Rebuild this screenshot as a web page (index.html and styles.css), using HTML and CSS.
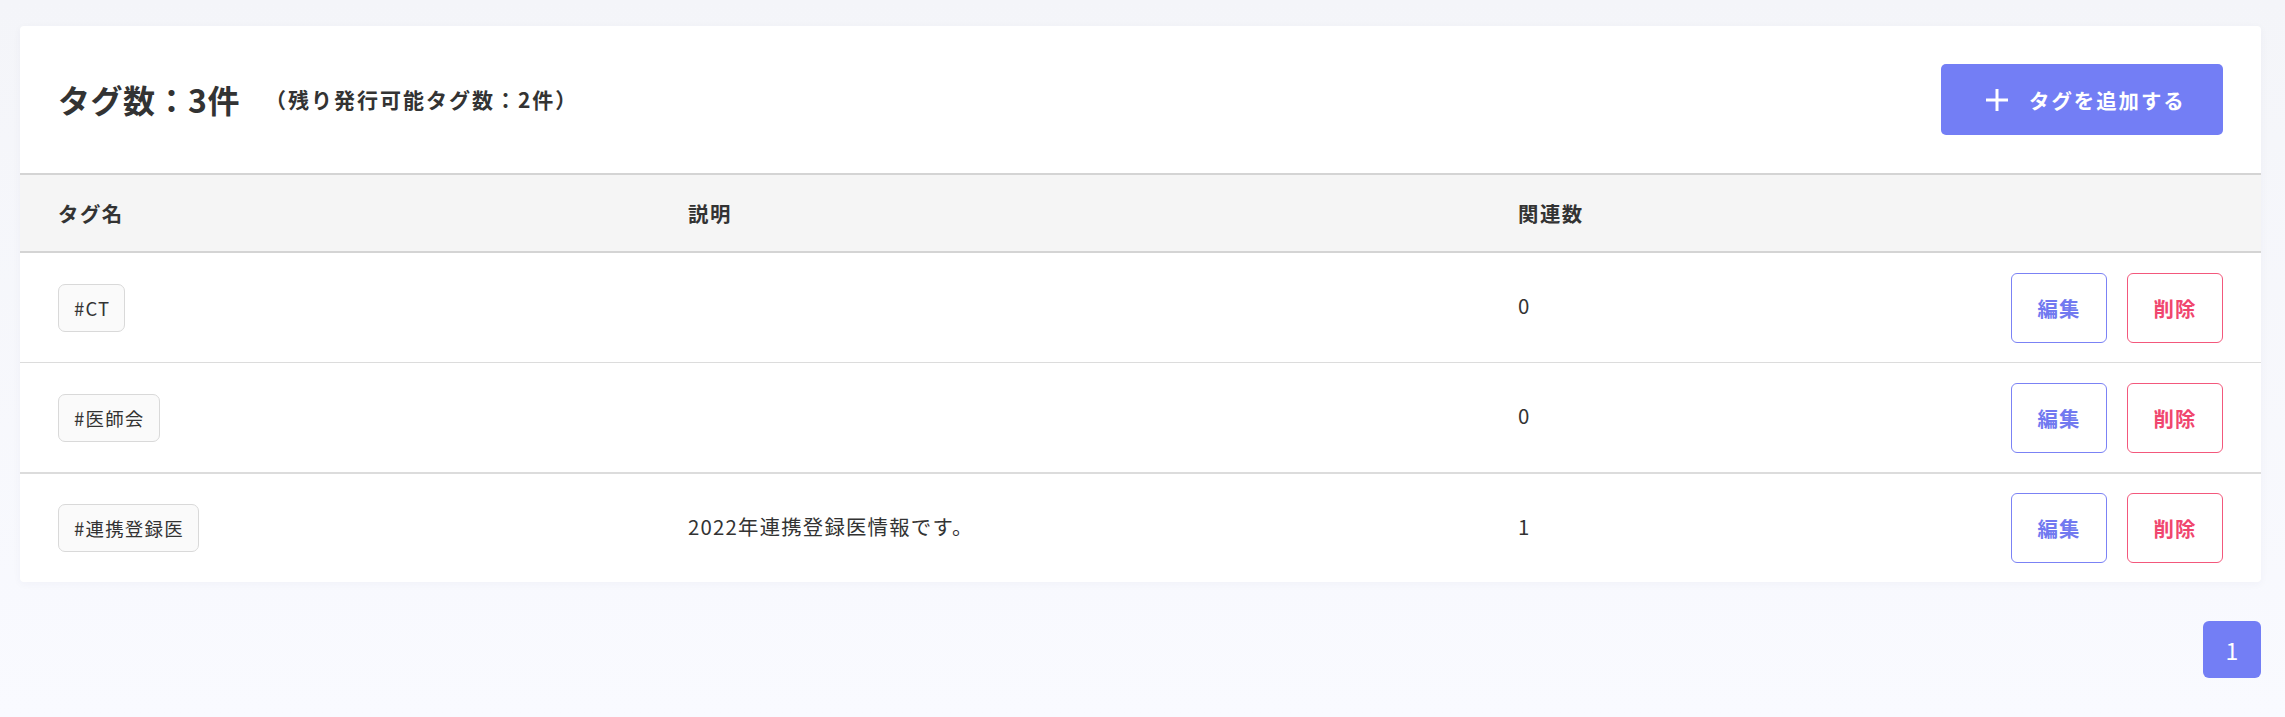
FILE: index.html
```html
<!DOCTYPE html>
<html lang="ja">
<head>
<meta charset="utf-8">
<title>タグ管理</title>
<link rel="stylesheet" href="styles.css">
</head>
<body>
<div class="page">
  <section class="card">
    <header class="card-head">
      <h1 class="title">タグ数：3件<span class="sub">（残り発行可能タグ数：2件）</span></h1>
      <button class="btn-add" type="button">
        <svg class="plus" width="22" height="22" viewBox="0 0 22 22"><path d="M11 0V22M0 11H22" stroke="#fff" stroke-width="3" fill="none"/></svg>
        <span>タグを追加する</span>
      </button>
    </header>
    <div class="thead">
      <div>タグ名</div>
      <div>説明</div>
      <div>関連数</div>
      <div></div>
    </div>
    <div class="row">
      <div><span class="chip">#CT</span></div>
      <div class="cell"></div>
      <div class="cell">0</div>
      <div class="actions"><button class="btn-edit" type="button">編集</button><button class="btn-del" type="button">削除</button></div>
    </div>
    <div class="row thick">
      <div><span class="chip">#医師会</span></div>
      <div class="cell"></div>
      <div class="cell">0</div>
      <div class="actions"><button class="btn-edit" type="button">編集</button><button class="btn-del" type="button">削除</button></div>
    </div>
    <div class="row last">
      <div><span class="chip">#連携登録医</span></div>
      <div class="cell">2022年連携登録医情報です。</div>
      <div class="cell">1</div>
      <div class="actions"><button class="btn-edit" type="button">編集</button><button class="btn-del" type="button">削除</button></div>
    </div>
  </section>
  <nav class="pager"><span class="page-num">1</span></nav>
</div>
</body>
</html>
```
FILE: styles.css
```css
* { box-sizing: border-box; }
html, body {
  margin: 0;
  height: 100%;
}
body {
  background: linear-gradient(180deg, #f4f5f9 0%, #f9faff 100%);
  font-family: "Noto Sans CJK JP", "Noto Sans", sans-serif;
  color: #333;
}
.page {
  padding: 26px 24px 0 20px;
}
.card {
  background: #fff;
  border-radius: 4px;
  box-shadow: 0 2px 8px rgba(40, 50, 90, 0.04);
  overflow: hidden;
}
.card-head {
  display: flex;
  justify-content: space-between;
  align-items: center;
  padding: 38px;
  border-bottom: 2px solid #d4d4d4;
}
.title {
  margin: 0;
  display: flex;
  align-items: center;
  font-size: 32px;
  font-weight: 700;
  letter-spacing: 0.5px;
  color: #333;
  line-height: 1.2;
}
.sub {
  margin-left: 25px;
  font-size: 21px;
  font-weight: 700;
  letter-spacing: 2px;
}
.btn-add {
  display: flex;
  align-items: center;
  width: 282px;
  height: 71px;
  padding: 0 0 0 45px;
  border: none;
  border-radius: 5px;
  background: #737ef5;
  color: #fff;
  font-family: inherit;
  font-size: 20.4px;
  font-weight: 700;
  letter-spacing: 2px;
}
.plus { margin-right: 21px; }
.thead, .row {
  display: grid;
  grid-template-columns: 630px 830px 1fr auto;
  align-items: center;
  padding: 0 38px;
}
.thead {
  height: 78px;
  background: #f5f5f5;
  border-bottom: 2px solid #d4d4d4;
  font-size: 20.4px;
  font-weight: 700;
  letter-spacing: 1.5px;
}
.row {
  height: 110px;
  border-bottom: 1px solid #dcdcdc;
  font-size: 20.4px;
}
.row.thick { height: 111px; border-bottom-width: 2px; }
.row.last { height: 108px; border-bottom: none; }
.cell { letter-spacing: 1.2px; padding-bottom: 5px; }
.chip {
  display: inline-flex;
  align-items: center;
  height: 48px;
  padding: 0 14px 0 15px;
  border: 1px solid #d9d9d9;
  border-radius: 7px;
  background: #fafafa;
  font-size: 18.5px;
  letter-spacing: 1.2px;
  color: #333;
}
.actions {
  display: flex;
  gap: 20px;
}
.actions button {
  width: 96px;
  height: 70px;
  border-radius: 6px;
  background: #fff;
  font-family: inherit;
  font-size: 20.4px;
  font-weight: 700;
  letter-spacing: 1px;
}
.btn-edit { border: 1px solid #7b82f5; color: #7179f0; }
.btn-del { border: 1px solid #f3587c; color: #f0466e; }
.pager {
  display: flex;
  justify-content: flex-end;
  margin-top: 39px;
}
.page-num {
  display: flex;
  align-items: center;
  justify-content: center;
  width: 58px;
  height: 57px;
  border-radius: 6px;
  background: #737ef5;
  color: #fff;
  font-size: 23px;
}
```
